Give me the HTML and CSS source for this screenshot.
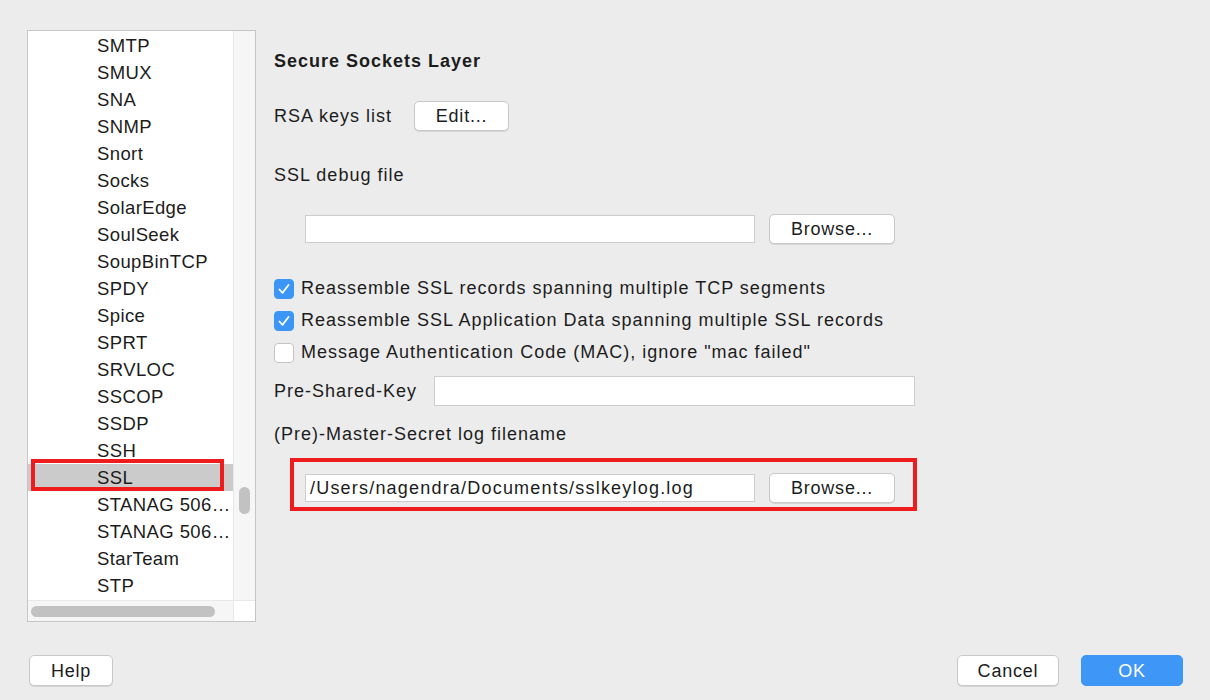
FILE: index.html
```html
<!DOCTYPE html>
<html>
<head>
<meta charset="utf-8">
<link rel="stylesheet" href="styles.css">
</head>
<body>
<div class="window">
  <div class="main">
    <div class="listpanel">
      <div class="list">
        <div class="row">SMTP</div>
        <div class="row">SMUX</div>
        <div class="row">SNA</div>
        <div class="row">SNMP</div>
        <div class="row">Snort</div>
        <div class="row">Socks</div>
        <div class="row">SolarEdge</div>
        <div class="row">SoulSeek</div>
        <div class="row">SoupBinTCP</div>
        <div class="row">SPDY</div>
        <div class="row">Spice</div>
        <div class="row">SPRT</div>
        <div class="row">SRVLOC</div>
        <div class="row">SSCOP</div>
        <div class="row">SSDP</div>
        <div class="row">SSH</div>
        <div class="row selected">SSL<span class="mark"></span></div>
        <div class="row">STANAG 506…</div>
        <div class="row">STANAG 506…</div>
        <div class="row">StarTeam</div>
        <div class="row">STP</div>
      </div>
      <div class="vscroll"><div class="vthumb"></div></div>
      <div class="hscroll"><div class="hthumb"></div></div>
      <div class="corner"></div>
    </div>
    <div class="prefs">
      <div class="title">Secure Sockets Layer</div>
      <div class="rsa">
        <span>RSA keys list</span>
        <button class="btn edit">Edit...</button>
      </div>
      <div class="label debug">SSL debug file</div>
      <div class="filerow first">
        <div class="field wide"></div>
        <button class="btn browse">Browse...</button>
      </div>
      <div class="checks">
        <label class="check"><span class="box on"><svg viewBox="0 0 20 20" width="20" height="20"><path d="M5.5 10.5 L8.6 13.8 L14.5 6" fill="none" stroke="#fff" stroke-width="1.8" stroke-linecap="round" stroke-linejoin="round"/></svg></span>Reassemble SSL records spanning multiple TCP segments</label>
        <label class="check"><span class="box on"><svg viewBox="0 0 20 20" width="20" height="20"><path d="M5.5 10.5 L8.6 13.8 L14.5 6" fill="none" stroke="#fff" stroke-width="1.8" stroke-linecap="round" stroke-linejoin="round"/></svg></span>Reassemble SSL Application Data spanning multiple SSL records</label>
        <label class="check"><span class="box"></span>Message Authentication Code (MAC), ignore "mac failed"</label>
      </div>
      <div class="psk">
        <span>Pre-Shared-Key</span>
        <div class="field pskfield"></div>
      </div>
      <div class="label master">(Pre)-Master-Secret log filename</div>
      <div class="highlight">
        <div class="filerow">
          <div class="field wide">/Users/nagendra/Documents/sslkeylog.log</div>
          <button class="btn browse">Browse...</button>
        </div>
      </div>
    </div>
  </div>
  <div class="footer">
    <button class="btn help">Help</button>
    <div class="right">
      <button class="btn cancel">Cancel</button>
      <button class="btn ok">OK</button>
    </div>
  </div>
</div>
</body>
</html>
```

FILE: styles.css
```css
html, body {
  margin: 0;
  padding: 0;
  background: #ececec;
}
body {
  font-family: "Liberation Sans", Arial, sans-serif;
  font-size: 18px;
  letter-spacing: 1px;
  color: #1c1c1c;
  width: 1210px;
  height: 700px;
  overflow: hidden;
}
.window {
  display: flex;
  flex-direction: column;
  height: 700px;
}
.main {
  display: flex;
  padding: 30px 0 0 27px;
  gap: 18px;
}
.listpanel {
  position: relative;
  width: 227px;
  height: 590px;
  border: 1px solid #c6c6c6;
  background: #fff;
  display: grid;
  grid-template-columns: 1fr 22px;
  grid-template-rows: 1fr 21px;
}
.list {
  overflow: hidden;
  padding-top: 1px;
  font-size: 18.5px;
  letter-spacing: 0.4px;
}
.row {
  position: relative;
  height: 27px;
  line-height: 27px;
  padding-left: 69px;
  white-space: nowrap;
}
.row.selected {
  background: #cbcbcb;
}
.mark {
  position: absolute;
  left: 3px;
  top: -5px;
  width: 185px;
  height: 24px;
  border: 4px solid #ee1c1c;
}
.vscroll {
  background: #f6f6f6;
  border-left: 1px solid #e8e8e8;
  position: relative;
}
.vthumb {
  position: absolute;
  left: 5px;
  top: 456px;
  width: 11px;
  height: 27px;
  border-radius: 6px;
  background: #c2c2c2;
}
.hscroll {
  background: #f6f6f6;
  border-top: 1px solid #e8e8e8;
  position: relative;
}
.hthumb {
  position: absolute;
  left: 3px;
  top: 5px;
  width: 184px;
  height: 11px;
  border-radius: 6px;
  background: #c2c2c2;
}
.corner {
  background: #fff;
  border-top: 1px solid #e8e8e8;
  border-left: 1px solid #e8e8e8;
}
.prefs {
  display: flex;
  flex-direction: column;
  align-items: flex-start;
}
.title {
  font-weight: bold;
  font-size: 18px;
  letter-spacing: 1px;
  margin-top: 20px;
  line-height: 22px;
}
.rsa {
  display: flex;
  align-items: center;
  gap: 22px;
  margin-top: 29px;
}
.btn {
  font-family: "Liberation Sans", Arial, sans-serif;
  font-size: 18px;
  letter-spacing: 0.8px;
  color: #1c1c1c;
  background: #fff;
  border: 1px solid #c8c8c8;
  border-radius: 5px;
  height: 30px;
  padding: 0;
  line-height: 28px;
  box-shadow: 0 1px 0 #d6d6d6;
}
.edit {
  width: 95px;
}
.label {
  line-height: 22px;
}
.debug {
  margin-top: 33px;
}
.filerow {
  display: flex;
  align-items: center;
  gap: 14px;
}
.filerow.first {
  margin-left: 31px;
  margin-top: 28px;
}
.field {
  height: 28px;
  box-sizing: border-box;
  background: #fff;
  border: 1px solid #cdcdcd;
  line-height: 26px;
  padding-left: 4px;
  white-space: nowrap;
  letter-spacing: 1.2px;
}
.wide {
  width: 450px;
}
.browse {
  width: 126px;
}
.checks {
  display: flex;
  flex-direction: column;
  gap: 11px;
  margin-top: 34px;
}
.check {
  display: flex;
  align-items: center;
  gap: 7px;
  line-height: 21px;
  height: 21px;
}
.box {
  width: 20px;
  height: 20px;
  box-sizing: border-box;
  border-radius: 4px;
  border: 1px solid #c4c4c4;
  background: #fff;
  display: inline-block;
}
.box.on {
  background: #3c96f8;
  border-color: #3c96f8;
}
.box.on svg {
  display: block;
  margin: -1px;
}
.psk {
  display: flex;
  align-items: center;
  gap: 17px;
  margin-top: 13px;
}
.pskfield {
  width: 481px;
  height: 30px;
}
.master {
  margin-top: 17px;
}
.highlight {
  margin-top: 13px;
  margin-left: 16px;
  border: 4px solid #ee1c1c;
  padding: 11px 18px 4px 11px;
}
.footer {
  display: flex;
  justify-content: space-between;
  align-items: center;
  margin-top: auto;
  padding: 0 27px 14px 29px;
}
.help {
  width: 84px;
  height: 31px;
}
.right {
  display: flex;
  gap: 22px;
}
.cancel {
  width: 102px;
  height: 31px;
}
.ok {
  width: 102px;
  height: 31px;
  background: #3e96f7;
  border-color: #3e96f7;
  color: #fff;
  box-shadow: none;
}
```
